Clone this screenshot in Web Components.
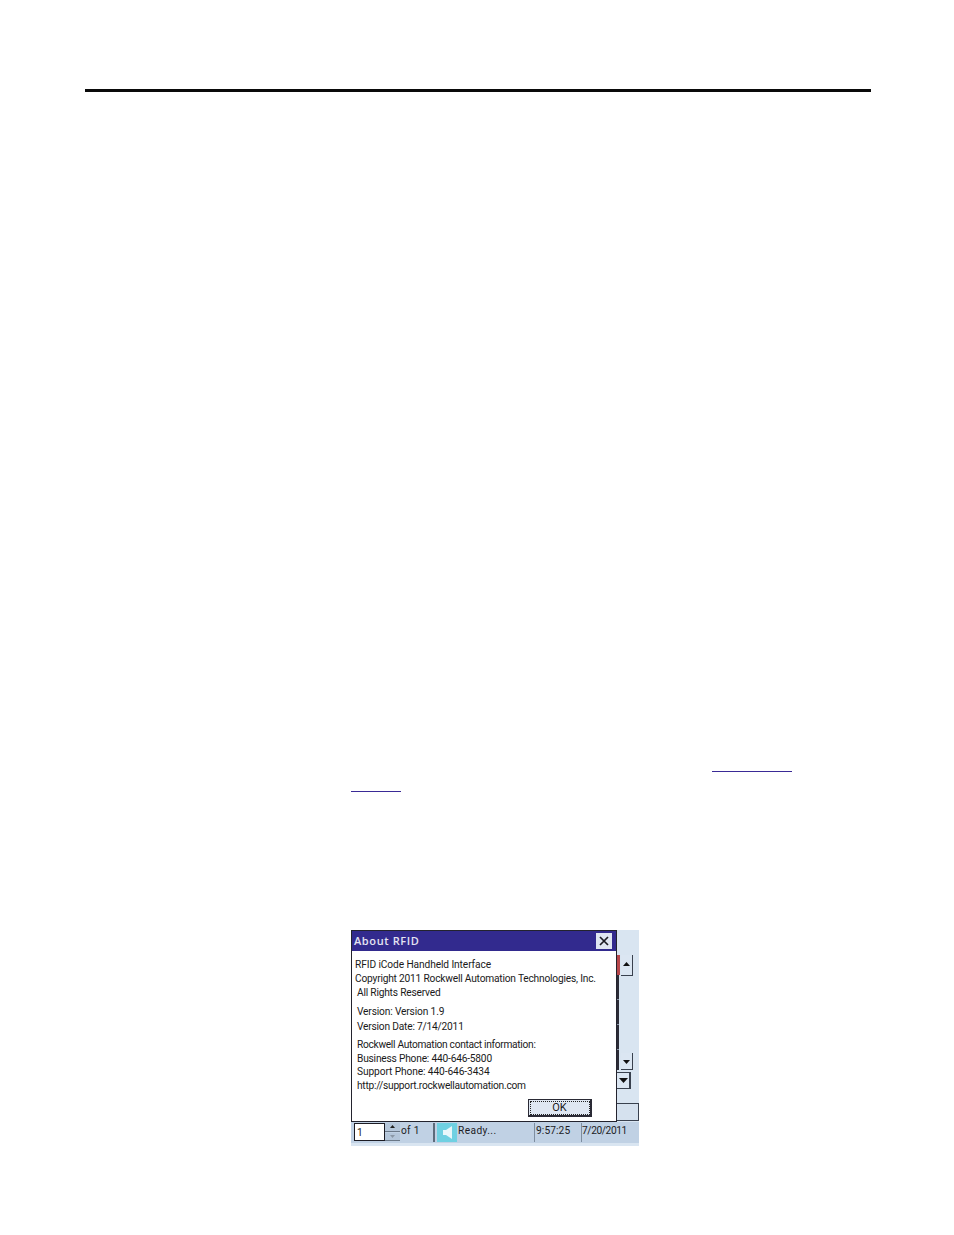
<!DOCTYPE html>
<html lang="en">
<head>
<meta charset="UTF-8">
<title>About RFID</title>
<style>
  html, body { margin: 0; background: #fff; }
</style>
<script type="module">
  class DocPage extends HTMLElement {
    constructor() {
      super();
      this.attachShadow({ mode: 'open' });
      this.shadowRoot.innerHTML = `
        <style>
          :host { display: flex; flex-direction: column; width: 954px; height: 1235px; background: #fff; overflow: hidden; }
          #rule { height: 3px; margin: 89px 83px 0 85px; background: #0a0a0a; }
          #links { display: flex; flex-direction: column; gap: 19px; margin-top: 679px; }
          .link { height: 1px; background: #3a2a96; }
          #l1 { width: 80px; margin-left: 712px; }
          #l2 { width: 50px; margin-left: 351px; }
          #shot { margin: 138px 0 0 351px; }
        </style>
        <div id="rule"></div>
        <div id="links">
          <div class="link" id="l1"></div>
          <div class="link" id="l2"></div>
        </div>
        <div id="shot"><slot></slot></div>
      `;
    }
  }

  class AboutDialog extends HTMLElement {
    constructor() {
      super();
      this.attachShadow({ mode: 'open' });
      this.shadowRoot.innerHTML = `
        <style>
          :host { display: flex; flex-direction: column; position: absolute; left: 0; top: 0; box-sizing: border-box; width: 266px; height: 192px;
            background: #fff; border: 1px solid #23232e; font: 10.2px/13px Roboto, sans-serif; color: #1a1a1a; }
          #title { display: flex; align-items: center; justify-content: space-between; height: 20px; flex: none; padding: 0 4px 2px 2px; box-sizing: border-box; background: #322a8e; color: #e4e4f2; font: 600 11px "Open Sans", sans-serif; letter-spacing: .6px; }
          #close { display: flex; width: 16px; height: 16px; margin-top: 2px; background: #dfe6f1; align-items: center; justify-content: center; }
          #body { flex: 1; display: flex; flex-direction: column; padding: 7px 4px 0 3px; white-space: nowrap; letter-spacing: -.2px; }
          p { margin: 0; padding-left: 2px; }
          .first { padding-left: 0; }
          .group { margin-bottom: 4px; }
          #contact { line-height: 13.4px; }
          #foot { display: flex; justify-content: flex-end; padding: 0 24px 4px 0; }
          #ok { width: 64px; height: 18px; box-sizing: border-box; display: flex; align-items: center; justify-content: center; background: #dfe7f2; border: 1px solid #2a2a35; border-right-width: 2px; border-bottom-width: 2px; outline: 1px dotted #222; outline-offset: -3px; font-size: 11px; }
        </style>
        <div id="title">
          <span>About RFID</span>
          <div id="close"><svg width="10" height="10" viewBox="0 0 10 10"><path d="M1 1 9 9M9 1 1 9" stroke="#1b1b22" stroke-width="1.7" fill="none"/></svg></div>
        </div>
        <div id="body">
          <div class="group" style="line-height:14px">
            <p class="first" style="letter-spacing:-.1px">RFID iCode Handheld Interface</p>
            <p class="first">Copyright 2011 Rockwell Automation Technologies, Inc.</p>
            <p>All Rights Reserved</p>
          </div>
          <div class="group" style="line-height:15px;margin-bottom:4.4px">
            <p style="letter-spacing:-.15px">Version: Version 1.9</p>
            <p>Version Date: 7/14/2011</p>
          </div>
          <div id="contact">
            <p style="letter-spacing:-.3px">Rockwell Automation contact information:</p>
            <p>Business Phone: 440-646-5800</p>
            <p style="letter-spacing:-.1px">Support Phone: 440-646-3434</p>
            <p style="letter-spacing:-.25px">http://support.rockwellautomation.com</p>
          </div>
        </div>
        <div id="foot"><div id="ok">OK</div></div>
      `;
    }
  }

  class StatusBar extends HTMLElement {
    constructor() {
      super();
      this.attachShadow({ mode: 'open' });
      this.shadowRoot.innerHTML = `
        <style>
          :host { display: flex; align-items: flex-start; gap: 0; box-sizing: border-box; height: 24px; padding: 1px 2px 0 3px; background: linear-gradient(#c0d1e4 0 21px, #d9e5f1 21px); font: 10.2px Roboto, sans-serif; letter-spacing: .25px; color: #1c1c24; }
          .cell { height: 19px; display: flex; align-items: center; padding-bottom: 4px; background: #c0d1e4; box-sizing: border-box; white-space: nowrap; }
          #num { width: 31px; height: 18px; background: #fff; border: 1px solid #1c1c24; padding-left: 2px; box-sizing: border-box; display: flex; align-items: center; }
          #spin { width: 15px; height: 18px; display: flex; flex-direction: column; gap: 1px; }
          #spin div { flex: 1; background: #b4c6da; display: flex; align-items: center; justify-content: center; border-bottom: 1px solid #6a7888; }
          #of { width: 35px; padding-left: 1px; border-right: 2px solid #5d6b7c; }
          #icon { width: 20px; margin-left: 2px; padding-bottom: 0; background: #6fd0e2; justify-content: center; }
          #ready { width: 78px; padding-left: 1px; border-right: 1px solid #7d8da0; letter-spacing: .4px; }
          #time { width: 47px; padding-left: 1px; border-right: 1px solid #7d8da0; letter-spacing: .1px; }
          #date { width: 55px; padding-left: 0; letter-spacing: -.4px; }
        </style>
        <div id="num">1</div>
        <div id="spin">
          <div><svg width="5" height="3"><path d="M0 3 2.5 0 5 3Z" fill="#222"/></svg></div>
          <div><svg width="5" height="3"><path d="M0 0 2.5 3 5 0Z" fill="#8a97a6"/></svg></div>
        </div>
        <div class="cell" id="of">of 1</div>
        <div class="cell" id="icon"><svg width="9" height="13" viewBox="0 0 9 13"><path d="M0 4H3L9 0V13L3 9H0Z" fill="#e9f7fb"/></svg></div>
        <div class="cell" id="ready">Ready...</div>
        <div class="cell" id="time">9:57:25</div>
        <div class="cell" id="date">7/20/2011</div>
      `;
    }
  }

  class AboutShot extends HTMLElement {
    constructor() {
      super();
      this.attachShadow({ mode: 'open' });
      this.shadowRoot.innerHTML = `
        <style>
          :host { display: flex; flex-direction: column; position: relative; width: 288px; height: 216px; background: #d9e5f1; }
          #back { flex: 1; display: flex; flex-direction: column; align-items: flex-start; padding: 25px 0 0 266px; }
          #strip { display: flex; }
          #track { width: 3px; height: 115px; }
          #red { height: 20px; background: #b8474b; }
          #line { width: 2px; height: 95px; background: repeating-linear-gradient(#2b2b36 0 24px, #8893a3 24px 25px); }
          #bars { display: flex; flex-direction: column; justify-content: space-between; margin-left: 1px; height: 115px; }
          .btn { width: 12px; box-sizing: border-box; background: #dbe6f2; border-right: 1px solid #39414e; border-bottom: 1px solid #39414e; display: flex; justify-content: center; }
          #up { height: 21px; padding-top: 7px; }
          #down { height: 17px; padding-top: 7px; }
          #combo { box-sizing: border-box; width: 14px; height: 17px; margin-top: 2px; background: #dbe6f2; border: 1px solid #39414e; border-left: 0; border-right-width: 2px; display: flex; justify-content: center; padding-top: 5px; }
          #box { box-sizing: border-box; width: 22px; height: 18px; margin-top: 14px; border: 1px solid #39414e; border-left: 0; background: #d5e1ee; }
        </style>
        <div id="back">
          <div id="strip">
            <div id="track"><div id="red"></div><div id="line"></div></div>
            <div id="bars">
              <div class="btn" id="up"><svg width="7" height="4"><path d="M0 4 3.5 0 7 4Z" fill="#111"/></svg></div>
              <div class="btn" id="down"><svg width="7" height="4"><path d="M0 0 3.5 4 7 0Z" fill="#111"/></svg></div>
            </div>
          </div>
          <div id="combo"><svg width="9" height="5"><path d="M0 0 4.500 5 9 0Z" fill="#111"/></svg></div>
          <div id="box"></div>
        </div>
        <status-bar></status-bar>
        <slot></slot>
      `;
    }
  }

  customElements.define('doc-page', DocPage);
  customElements.define('about-dialog', AboutDialog);
  customElements.define('status-bar', StatusBar);
  customElements.define('about-shot', AboutShot);
</script>
</head>
<body>
  <doc-page>
    <about-shot>
      <about-dialog></about-dialog>
    </about-shot>
  </doc-page>
</body>
</html>
